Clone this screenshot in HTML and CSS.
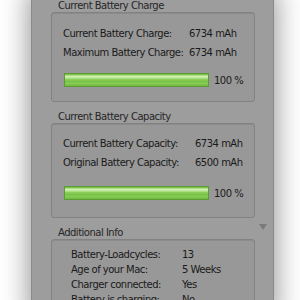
FILE: index.html
```html
<!DOCTYPE html>
<html>
    <head>
        <link rel="stylesheet" href="styles.css">
    </head>
    <body>
    <div class="window">
        <div class="group-title">Current Battery Charge</div>
        <div class="group charge">
            <div class="row"><span class="label">Current Battery Charge:</span><span>6734 mAh</span></div>
            <div class="row"><span class="label">Maximum Battery Charge:</span><span>6734 mAh</span></div>
            <div class="meter"><div class="bar"></div><span>100 %</span></div>
        </div>

        <div class="group-title">Current Battery Capacity</div>
        <div class="group capacity">
            <div class="row"><span class="label">Current Battery Capacity:</span><span>6734 mAh</span></div>
            <div class="row"><span class="label">Original Battery Capacity:</span><span>6500 mAh</span></div>
            <div class="meter"><div class="bar"></div><span>100 %</span></div>
        </div>

        <div class="group-title toggle">
            <span>Additional Info</span>
            <span class="arrow"></span>
        </div>
        <div class="group info">
            <div class="row"><span class="label">Battery-Loadcycles:</span><span>13</span></div>
            <div class="row"><span class="label">Age of your Mac:</span><span>5 Weeks</span></div>
            <div class="row"><span class="label">Charger connected:</span><span>Yes</span></div>
            <div class="row"><span class="label">Battery is charging:</span><span>No</span></div>
        </div>
    </div>
    </body>
</html>
```

FILE: styles.css
```css
html, body {
    margin: 0;
    height: 300px;
    overflow: hidden;
    background: #ffffff;
}
body {
    font-family: "DejaVu Sans", sans-serif;
    font-size: 10px;
    letter-spacing: -0.5px;
    white-space: nowrap;
    color: #1a1a1a;
}
.window {
    margin-left: 31px;
    margin-top: -9px;
    width: 243px;
    height: 330px;
    padding: 0 18px 0 19px;
    box-sizing: border-box;
    background-color: #9d9d9d;
    border-left: 1px solid #8a8a8a;
    border-right: 1px solid #8a8a8a;
    box-shadow: 0 0 26px 2px rgba(0, 0, 0, 0.42);
}
.group-title {
    padding: 8px 0 0 7px;
    height: 13px;
    line-height: 13px;
    color: #262626;
}
.group {
    border: 1px solid #828282;
    border-radius: 3px;
    background-color: #989898;
    box-shadow: inset 0 1px 0 #8c8c8c;
    padding: 0 0 0 11px;
}
.charge {
    padding-top: 11px;
    padding-bottom: 14px;
}
.capacity {
    padding-top: 10px;
    padding-bottom: 17px;
}
.row {
    display: flex;
    height: 19px;
    line-height: 19px;
}
.charge .label {
    width: 126px;
}
.capacity .label {
    width: 132px;
}
.charge .meter {
    margin-top: 11px;
}
.capacity .meter {
    margin-top: 14px;
}
.info {
    padding-top: 7px;
    padding-left: 19px;
}
.info .row {
    height: 15px;
    line-height: 15px;
}
.info .label {
    width: 111px;
}
.meter {
    display: flex;
    align-items: center;
    gap: 5px;
    padding-left: 1px;
}
.bar {
    width: 145px;
    height: 14px;
    box-sizing: border-box;
    border: 1px solid #5e9a36;
    background: linear-gradient(#7cc24a 0, #7cc24a 8%, #d6f2b8 16%, #c2eaa0 30%, #8fd15e 44%, #79c247 62%, #86cc55 80%, #6cb83c 100%);
}
.toggle {
    display: flex;
    justify-content: space-between;
    align-items: flex-start;
    margin-right: -12px;
}
.arrow {
    width: 0;
    height: 0;
    margin-top: -2px;
    border-left: 4px solid transparent;
    border-right: 4px solid transparent;
    border-top: 6px solid #7a7a7a;
}
```
